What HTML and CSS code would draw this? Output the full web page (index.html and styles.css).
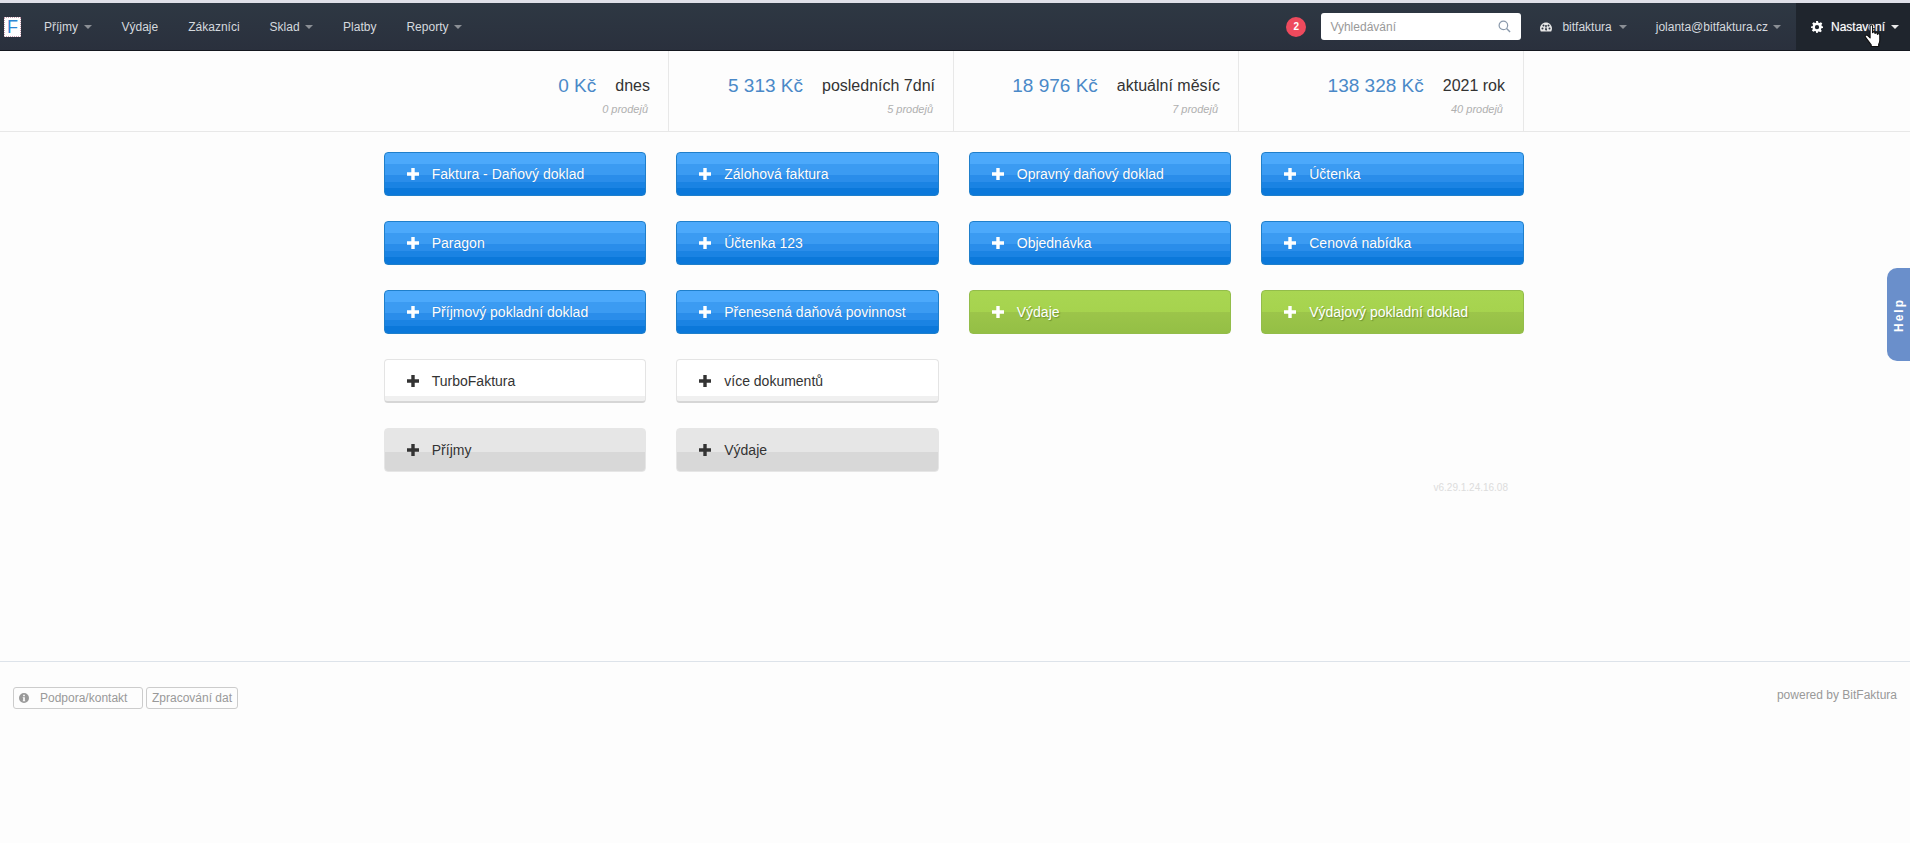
FILE: index.html
```html
<!DOCTYPE html>
<html lang="cs">
<head>
<meta charset="utf-8">
<title>BitFaktura</title>
<link rel="stylesheet" href="styles.css">
</head>
<body>
<div class="app">
  <nav class="nav">
    <span class="logo">F</span>
    <ul class="menu">
      <li class="item">Příjmy<i class="caret"></i></li>
      <li class="item">Výdaje</li>
      <li class="item">Zákazníci</li>
      <li class="item">Sklad<i class="caret"></i></li>
      <li class="item">Platby</li>
      <li class="item">Reporty<i class="caret"></i></li>
    </ul>
    <div class="right">
      <span class="badge">2</span>
      <div class="search">
        <span>Vyhledávání</span>
        <svg class="search-icon" viewBox="0 0 14 14" width="13" height="13"><circle cx="5.8" cy="5.8" r="4.6" fill="none" stroke="#8a99ab" stroke-width="1.3"/><path d="M9.2 9.2L13 13" stroke="#8a99ab" stroke-width="1.5" fill="none"/></svg>
      </div>
      <div class="ritem org">
        <svg class="ico" viewBox="0 0 24 24" width="12" height="12"><path fill="#e6e6e6" fill-rule="evenodd" d="M12 3C5.4 3 0 8.4 0 15c0 2.2.6 4.3 1.6 6h20.8c1-1.700 1.600-3.800 1.600-6 0-6.600-5.400-12-12-12zM5 17a2 2 0 1 1 0-4 2 2 0 0 1 0 4zm2-6a2 2 0 1 1 0-4 2 2 0 0 1 0 4zm5-3a2 2 0 1 1 0 4 2 2 0 0 1 0-4zm1.800 10.500a2.500 2.500 0 0 1-3.600-2.700l1.500-3.800h.7l1.200 3.800a2.500 2.500 0 0 1 .2 2.700zM17 11a2 2 0 1 1 0-4 2 2 0 0 1 0 4zm2 6a2 2 0 1 1 0-4 2 2 0 0 1 0 4z"/></svg>
        <span>bitfaktura</span><i class="caret"></i>
      </div>
      <div class="ritem user"><span>jolanta@bitfaktura.cz</span><i class="caret"></i></div>
      <div class="ritem settings">
        <svg class="ico" viewBox="0 0 24 24" width="12" height="12"><path fill="#fff" fill-rule="evenodd" d="M10 0h4l.7 3.300 2.200.9L19.800 2.400l2.800 2.800-1.800 2.900.9 2.200L24 11v3l-3.300.7-.9 2.200 1.800 2.900-2.800 2.800-2.900-1.800-2.200.9L13.500 24h-3l-.7-3.300-2.200-.9-2.900 1.800-2.800-2.800 1.800-2.900-.9-2.200L0 14v-3l3.300-.7.900-2.200L2.400 5.200l2.800-2.800 2.900 1.800 2.200-.9zM12 8a4.300 4.300 0 1 0 0 8.600A4.300 4.300 0 0 0 12 8z"/></svg>
        <span>Nastavení</span><i class="caret caret-light"></i>
      </div>
    </div>
    <svg class="cursor" viewBox="0 0 18 21" width="20" height="24"><path fill="#fff" stroke="#111" stroke-width="1" stroke-linejoin="round" d="M5.500 1.500c0-1.300 2.200-1.300 2.200 0v6c.2-1 2-1 2.200 0v.8c.2-1 2-1 2.200 0v.8c.3-.9 2.100-.8 2.100.3v5.100c0 1.500-.5 2.500-1 3.500v2H6.500v-1.500C5 16.500 3 14 1.300 11.500c-.9-1.300.9-2.500 2-1.300l2.200 2z"/></svg>
  </nav>

  <section class="stats">
    <div class="wrap stat-grid">
      <div class="stat"><div class="stat-main"><span class="value">0 Kč</span><span class="label">dnes</span></div><div class="count">0 prodejů</div></div>
      <div class="stat"><div class="stat-main"><span class="value">5 313 Kč</span><span class="label">posledních 7dní</span></div><div class="count">5 prodejů</div></div>
      <div class="stat"><div class="stat-main"><span class="value">18 976 Kč</span><span class="label">aktuální měsíc</span></div><div class="count">7 prodejů</div></div>
      <div class="stat"><div class="stat-main"><span class="value">138 328 Kč</span><span class="label">2021 rok</span></div><div class="count">40 prodejů</div></div>
    </div>
  </section>

  <main class="main">
    <div class="wrap">
      <div class="btn-grid">
        <a class="btn blue"><svg class="plus" viewBox="0 0 12 12"><path d="M4.300 0h3.400v4.300H12v3.400H7.700V12H4.300V7.700H0V4.300h4.300z"/></svg>Faktura - Daňový doklad</a>
        <a class="btn blue"><svg class="plus" viewBox="0 0 12 12"><path d="M4.300 0h3.400v4.300H12v3.400H7.700V12H4.300V7.700H0V4.300h4.300z"/></svg>Zálohová faktura</a>
        <a class="btn blue"><svg class="plus" viewBox="0 0 12 12"><path d="M4.300 0h3.400v4.300H12v3.400H7.700V12H4.300V7.700H0V4.300h4.300z"/></svg>Opravný daňový doklad</a>
        <a class="btn blue"><svg class="plus" viewBox="0 0 12 12"><path d="M4.300 0h3.400v4.300H12v3.400H7.700V12H4.300V7.700H0V4.300h4.300z"/></svg>Účtenka</a>
        <a class="btn blue"><svg class="plus" viewBox="0 0 12 12"><path d="M4.300 0h3.400v4.300H12v3.400H7.700V12H4.300V7.700H0V4.300h4.300z"/></svg>Paragon</a>
        <a class="btn blue"><svg class="plus" viewBox="0 0 12 12"><path d="M4.300 0h3.400v4.300H12v3.400H7.700V12H4.300V7.700H0V4.300h4.300z"/></svg>Účtenka 123</a>
        <a class="btn blue"><svg class="plus" viewBox="0 0 12 12"><path d="M4.300 0h3.400v4.300H12v3.400H7.700V12H4.300V7.700H0V4.300h4.300z"/></svg>Objednávka</a>
        <a class="btn blue"><svg class="plus" viewBox="0 0 12 12"><path d="M4.300 0h3.400v4.300H12v3.400H7.700V12H4.300V7.700H0V4.300h4.300z"/></svg>Cenová nabídka</a>
        <a class="btn blue"><svg class="plus" viewBox="0 0 12 12"><path d="M4.300 0h3.400v4.300H12v3.400H7.700V12H4.300V7.700H0V4.300h4.300z"/></svg>Příjmový pokladní doklad</a>
        <a class="btn blue"><svg class="plus" viewBox="0 0 12 12"><path d="M4.300 0h3.400v4.300H12v3.400H7.700V12H4.300V7.700H0V4.300h4.300z"/></svg>Přenesená daňová povinnost</a>
        <a class="btn green"><svg class="plus" viewBox="0 0 12 12"><path d="M4.300 0h3.400v4.300H12v3.400H7.700V12H4.300V7.700H0V4.300h4.300z"/></svg>Výdaje</a>
        <a class="btn green"><svg class="plus" viewBox="0 0 12 12"><path d="M4.300 0h3.400v4.300H12v3.400H7.700V12H4.300V7.700H0V4.300h4.300z"/></svg>Výdajový pokladní doklad</a>
        <a class="btn white"><svg class="plus" viewBox="0 0 12 12"><path d="M4.300 0h3.400v4.300H12v3.400H7.700V12H4.300V7.700H0V4.300h4.300z"/></svg>TurboFaktura</a>
        <a class="btn white"><svg class="plus" viewBox="0 0 12 12"><path d="M4.300 0h3.400v4.300H12v3.400H7.700V12H4.300V7.700H0V4.300h4.300z"/></svg>více dokumentů</a>
        <span class="btn-gap"></span><span class="btn-gap"></span>
        <a class="btn grey"><svg class="plus" viewBox="0 0 12 12"><path d="M4.300 0h3.400v4.300H12v3.400H7.700V12H4.300V7.700H0V4.300h4.300z"/></svg>Příjmy</a>
        <a class="btn grey"><svg class="plus" viewBox="0 0 12 12"><path d="M4.300 0h3.400v4.300H12v3.400H7.700V12H4.300V7.700H0V4.300h4.300z"/></svg>Výdaje</a>
      </div>
      <div class="version">v6.29.1.24.16.08</div>
    </div>
  </main>

  <footer class="footer">
    <div class="foot-left">
      <a class="foot-btn foot-support">
        <svg viewBox="0 0 12 12" width="10" height="10"><path fill="#999" fill-rule="evenodd" d="M6 0a6 6 0 1 1 0 12A6 6 0 0 1 6 0zM5 2v2h2V2zM4.500 5v1H5v3H4.500v1h3V9H7V5z"/></svg>
        <span>Podpora/kontakt</span>
      </a>
      <a class="foot-btn">Zpracování dat</a>
    </div>
    <div class="powered">powered by BitFaktura</div>
  </footer>

  <div class="help"><span>Help</span></div>
</div>
</body>
</html>
```
FILE: styles.css
```css
* { box-sizing: border-box; }
html, body { margin: 0; padding: 0; height: 100%; overflow: hidden; }
body { background: #fdfdfd; font-family: "Liberation Sans", Arial, sans-serif; font-size: 12px; color: #333; }
.app { height: 100vh; display: flex; flex-direction: column; border-top: 3px solid #dfe0e8; position: relative; }

/* top navigation */
.nav { height: 48px; flex: none; display: flex; align-items: center; position: relative; background: linear-gradient(#2e3843, #2a303d); border-bottom: 1px solid #14181f; color: #d5d9de; }
.logo { width: 17px; height: 20px; margin-left: 4px; background: #fff; outline: 1px dotted #c9a0b0; outline-offset: -1px; color: #2a86d4; font-size: 18px; line-height: 20px; text-align: center; }
.menu { list-style: none; margin: 0 0 0 8px; padding: 0; display: flex; }
.item { padding: 0 15px; white-space: nowrap; display: flex; align-items: center; }
.caret { display: inline-block; width: 0; height: 0; margin-left: 5.5px; border-top: 4px solid #8b8f95; border-left: 4px solid transparent; border-right: 4px solid transparent; }
.caret-light { border-top-color: #e8e8e8; margin-left: 6px; }
.right { margin-left: auto; display: flex; align-items: center; height: 100%; }
.badge { width: 20px; height: 20px; border-radius: 50%; background: #ee4a5d; color: #fff; font-size: 10px; font-weight: 700; line-height: 20px; text-align: center; margin-right: 15px; }
.search { width: 200px; height: 27px; background: #fff; border-radius: 3px; color: #999; display: flex; align-items: center; justify-content: space-between; padding: 0 10px 0 9px; margin-right: 19px; }
.ritem { display: flex; align-items: center; white-space: nowrap; height: 100%; }
.ico { margin-right: 10px; flex: none; }
.org { margin-right: 29px; }
.user { margin-right: 15px; }
.user .caret { margin-left: 5px; }
.org .caret { margin-left: 7px; }
.settings { width: 114px; background: #1f252d; padding-left: 15px; color: #fff; text-shadow: 0 0 1px rgba(255,255,255,.5); }
.settings .ico { margin-right: 8px; }
.cursor { position: absolute; right: 26px; top: 21px; }

/* statistics strip */
.wrap { width: 1140px; margin-left: 384px; }
.stats { height: 81px; flex: none; border-bottom: 1px solid #e8e8e8; }
.stat-grid { display: grid; grid-template-columns: repeat(4, 285px); height: 100%; }
.stat { border-right: 1px solid #e8e8e8; padding: 24px 18px 0 0; text-align: right; }
.stat-main { display: flex; justify-content: flex-end; align-items: center; gap: 19px; height: 22px; }
.value { font-size: 19px; color: #4a89c8; }
.label { font-size: 16px; color: #333; }
.count { margin: 5px 2px 0 0; font-size: 11px; font-style: italic; color: #b0b0b0; line-height: 14px; }

/* buttons */
.main { flex: 1; min-height: 0; padding-top: 20px; }
.btn-grid { margin-left: -.25px; display: grid; grid-template-columns: repeat(4, 262.5px); column-gap: 30px; row-gap: 25px; grid-auto-rows: 44px; }
.btn { display: flex; align-items: center; padding-left: 22px; border-radius: 4px; border: 1px solid; font-size: 14px; white-space: nowrap; }
.plus { width: 12px; height: 12px; margin-right: 13px; flex: none; fill: currentColor; }
.blue { color: #fff; border-color: #1f7fcb; background: linear-gradient(#4ca9fb 0, #4ca9fb 27%, #3b9bf2 27%, #3b9bf2 52%, #2a8dea 52%, #2a8dea 68%, #1a83e3 68%, #1a83e3 84%, #0b78da 84%); text-shadow: 0 0 1px rgba(0,50,110,.35); }
.green { color: #fff; border-color: #93bd4a; background: linear-gradient(#a9d652 0, #a6d34e 50%, #9cc54a 50%, #94bf45 100%); text-shadow: 1px 1px 1px rgba(60,90,20,.45); }
.white { color: #333; border-color: #e4e4e4; background: linear-gradient(#fff 0, #fff 88%, #f0f0f0 88%); border-bottom: 2px solid #d6d6d6; }
.grey { color: #333; border-color: #e6e6e6; background: linear-gradient(#e6e6e6 0, #e6e6e6 55%, #d8d8d8 55%); }
.version { margin-top: 10px; padding-right: 16px; text-align: right; font-size: 10px; line-height: 12px; color: #dcdcdc; }

/* footer */
.footer { height: 182px; flex: none; border-top: 1px solid #dde3ea; padding: 25px 13px 0; display: flex; justify-content: space-between; align-items: flex-start; }
.foot-left { display: flex; gap: 3px; }
.foot-btn { height: 22px; display: flex; align-items: center; padding: 0 5px; border: 1px solid #ccc; border-radius: 3px; color: #999; }
.foot-support { width: 130px; padding-left: 5px; }
.foot-support span { margin-left: 11px; }
.powered { color: #999; margin-top: 1px; line-height: 14px; }

/* help tab */
.help { position: absolute; right: 0; top: 265px; width: 23px; height: 93px; border-radius: 10px 0 0 10px; background: #6a8fcb; display: flex; align-items: center; justify-content: center; }
.help span { transform: rotate(-90deg); color: #fff; font-weight: 700; font-size: 12px; letter-spacing: 2px; }
```
